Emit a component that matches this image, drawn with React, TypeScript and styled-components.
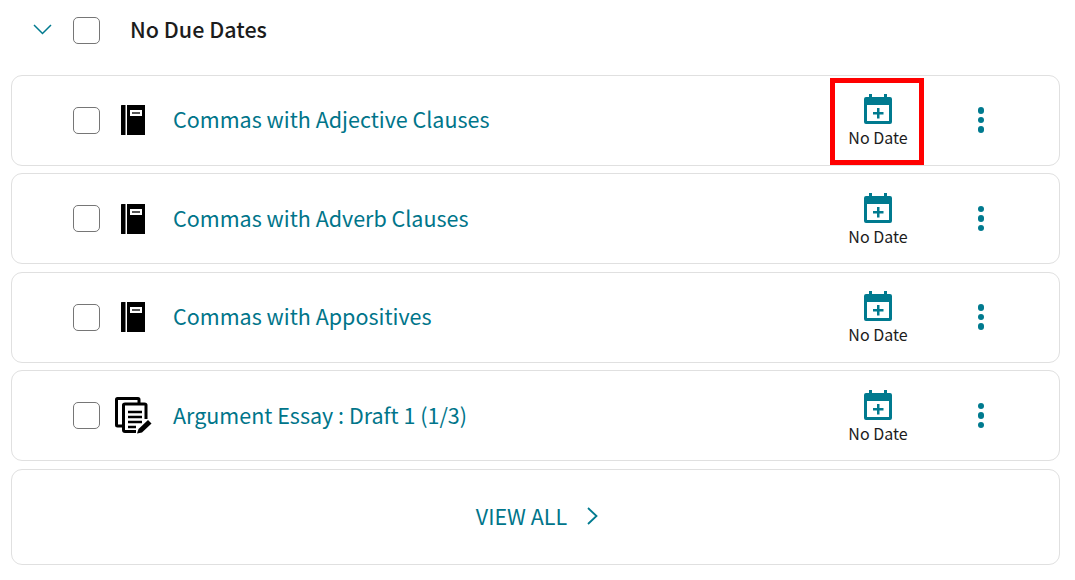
import React from "react";
import styled, { createGlobalStyle } from "styled-components";

const GlobalStyle = createGlobalStyle`
  html, body {
    margin: 0;
    padding: 0;
    background: #fff;
    font-family: "Noto Sans CJK JP", "Open Sans", sans-serif;
  }
`;

const teal = "#007a8f";

const Page = styled.div`
  width: 1049px;
  margin-left: 11px;
  display: flex;
  flex-direction: column;
`;

const Header = styled.div`
  height: 60px;
  margin-bottom: 14.6px;
  display: flex;
  align-items: center;
`;

const Chevron = styled.button`
  width: 62px;
  height: 30px;
  border: 0;
  padding: 0 0 1px;
  background: none;
  display: flex;
  align-items: center;
  justify-content: center;
`;

const Checkbox = styled.span`
  flex: none;
  box-sizing: border-box;
  width: 27px;
  height: 27px;
  border: 1px solid #767676;
  border-radius: 5px;
  background: #fff;
`;

const Heading = styled.h2`
  margin: 0 0 0 30px;
  font-size: 21.5px;
  line-height: 30px;
  font-weight: 500;
  color: #1c1c1c;
  position: relative;
  top: -1px;
`;

const List = styled.div`
  display: flex;
  flex-direction: column;
  gap: 7.5px;
`;

const Card = styled.div`
  box-sizing: border-box;
  height: 91px;
  border: 1px solid #e0e0e0;
  border-radius: 11px;
  background: #fff;
  display: flex;
  align-items: center;
  padding: 0 56px 0 61px;
`;

const TypeIcon = styled.span`
  flex: none;
  width: 66px;
  margin-right: 7px;
  display: flex;
  justify-content: center;
`;

const Title = styled.a`
  flex: 1;
  font-size: 21.5px;
  line-height: 30px;
  color: #00758a;
  padding-bottom: 2px;
`;

const DateCell = styled.div<{ $marked?: boolean }>`
  position: relative;
  flex: none;
  width: 94px;
  margin-right: 34px;
  padding-top: 2px;
  display: flex;
  flex-direction: column;
  align-items: center;
  gap: 2px;
  ${(p) =>
    p.$marked &&
    `&::after {
      content: "";
      position: absolute;
      left: -1px;
      top: -14px;
      width: 94px;
      height: 87px;
      box-sizing: border-box;
      border: 5px solid #ff0000;
    }`}
`;

const DateLabel = styled.span`
  font-size: 16px;
  line-height: 22px;
  color: #1c1c1c;
`;

const Dots = styled.button`
  flex: none;
  width: 44px;
  height: 44px;
  border: 0;
  padding: 0;
  background: none;
  display: flex;
  flex-direction: column;
  align-items: center;
  justify-content: center;
  gap: 3px;
`;

const Dot = styled.span`
  width: 6.5px;
  height: 6.5px;
  border-radius: 50%;
  background: ${teal};
`;

const ViewAllCard = styled.div`
  box-sizing: border-box;
  height: 96px;
  border: 1px solid #e0e0e0;
  border-radius: 11px;
  display: flex;
  align-items: center;
  justify-content: center;
  gap: 20px;
  padding: 0 0 2px 3px;
  font-size: 21.5px;
  line-height: 30px;
  color: #00758a;
`;

const BookIcon = () => (
  <svg width="24" height="30" viewBox="0 0 24 30">
    <path d="M0.5 0H4.5V30H0.5Q0 30 0 29.5V0.5Q0 0 0.5 0Z" fill="#000" />
    <path fillRule="evenodd" d="M6 0H24V30H6ZM9 5V11H21V5Z" fill="#000" />
    <rect x="11" y="7" width="8" height="2" fill="#555" />
  </svg>
);

const EssayIcon = () => (
  <svg width="37" height="37" viewBox="0 0 37 37" fill="none">
    <path d="M7 29H2.500Q1.500 29 1.500 28V2.500Q1.500 1.500 2.500 1.500H23Q24 1.500 24 2.500V6" stroke="#000" strokeWidth="3" />
    <path d="M21 34.500H10Q8.500 34.500 8.500 33V8Q8.500 7 10 7H29.500Q31 7 31 8V22" stroke="#000" strokeWidth="3" />
    <path d="M13 15H27M13 20H27M13 25H27M13 30H21" stroke="#000" strokeWidth="2.500" />
    <path d="M22 36.500L23.500 32L33 23L36.500 26.500L27 35.500Z" fill="#000" stroke="#fff" strokeWidth="1" paintOrder="stroke" />
  </svg>
);

const CalendarIcon = () => (
  <svg width="28" height="30" viewBox="0 0 28 30">
    <path
      fillRule="evenodd"
      fill={teal}
      d="M5 0H8V3H20V0H23V3H26Q28 3 28 5V28Q28 30 26 30H2Q0 30 0 28V5Q0 3 2 3H5ZM3 11V27H25V11Z"
    />
    <path d="M13 14H15.500V18H19.500V20.500H15.500V24.500H13V20.500H9V18H13Z" fill={teal} />
  </svg>
);

const items = [
  { title: "Commas with Adjective Clauses", icon: <BookIcon />, marked: true },
  { title: "Commas with Adverb Clauses", icon: <BookIcon /> },
  { title: "Commas with Appositives", icon: <BookIcon /> },
  { title: "Argument Essay : Draft 1 (1/3)", icon: <EssayIcon /> },
];

export default function App() {
  return (
    <Page>
      <GlobalStyle />
      <Header>
        <Chevron aria-label="Collapse">
          <svg width="19" height="11" viewBox="0 0 19 11" fill="none">
            <path d="M1 1L9.500 9.500L18 1" stroke={teal} strokeWidth="1.500" />
          </svg>
        </Chevron>
        <Checkbox />
        <Heading>No Due Dates</Heading>
      </Header>
      <List>
        {items.map((item) => (
          <Card key={item.title}>
            <Checkbox />
            <TypeIcon>{item.icon}</TypeIcon>
            <Title>{item.title}</Title>
            <DateCell $marked={item.marked}>
              <CalendarIcon />
              <DateLabel>No Date</DateLabel>
            </DateCell>
            <Dots aria-label="More">
              <Dot />
              <Dot />
              <Dot />
            </Dots>
          </Card>
        ))}
        <ViewAllCard>
          VIEW ALL
          <svg width="11" height="18" viewBox="0 0 11 18" fill="none">
            <path d="M1 1L9.500 9L1 17" stroke={teal} strokeWidth="1.800" />
          </svg>
        </ViewAllCard>
      </List>
    </Page>
  );
}
